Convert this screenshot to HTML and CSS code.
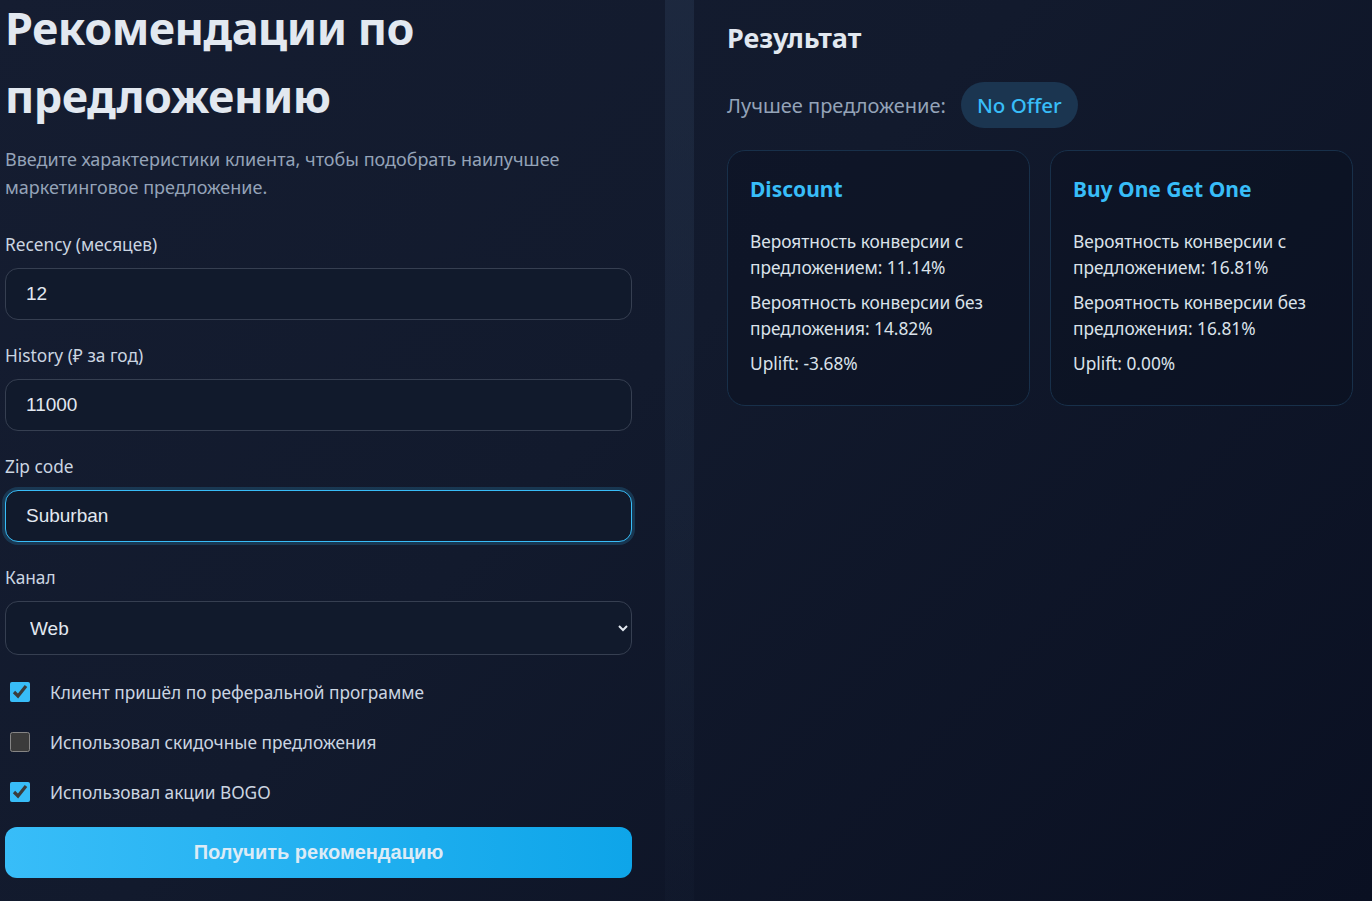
FILE: index.html
```html
<!DOCTYPE html>
<html lang="ru">
<head>
<meta charset="utf-8">
<title>Рекомендации по предложению</title>
<link rel="stylesheet" href="styles.css">
</head>
<body>
<div class="layout">
  <section class="form-panel">
    <h1 class="title">Рекомендации по предложению</h1>
    <p class="subtitle">Введите характеристики клиента, чтобы подобрать наилучшее маркетинговое предложение.</p>
    <form class="form">
      <div class="field">
        <label class="field-label" for="recency">Recency (месяцев)</label>
        <input class="control" id="recency" type="text" value="12">
      </div>
      <div class="field">
        <label class="field-label" for="history">History (₽ за год)</label>
        <input class="control" id="history" type="text" value="11000">
      </div>
      <div class="field">
        <label class="field-label" for="zip">Zip code</label>
        <input class="control control-focus" id="zip" type="text" value="Suburban">
      </div>
      <div class="field">
        <label class="field-label" for="channel">Канал</label>
        <select class="control control-select" id="channel">
          <option>Web</option>
          <option>Phone</option>
          <option>Multichannel</option>
        </select>
      </div>
      <label class="check"><input type="checkbox" checked><span>Клиент пришёл по реферальной программе</span></label>
      <label class="check"><input type="checkbox"><span>Использовал скидочные предложения</span></label>
      <label class="check"><input type="checkbox" checked><span>Использовал акции BOGO</span></label>
      <button class="submit" type="button">Получить рекомендацию</button>
    </form>
  </section>
  <div class="divider"></div>
  <section class="result-panel">
    <h2 class="result-title">Результат</h2>
    <div class="best">
      <span class="best-label">Лучшее предложение:</span>
      <span class="badge">No Offer</span>
    </div>
    <div class="cards">
      <div class="card">
        <h3 class="card-title">Discount</h3>
        <p class="card-line">Вероятность конверсии с предложением: 11.14%</p>
        <p class="card-line">Вероятность конверсии без предложения: 14.82%</p>
        <p class="card-line">Uplift: -3.68%</p>
      </div>
      <div class="card">
        <h3 class="card-title">Buy One Get One</h3>
        <p class="card-line">Вероятность конверсии с предложением: 16.81%</p>
        <p class="card-line">Вероятность конверсии без предложения: 16.81%</p>
        <p class="card-line">Uplift: 0.00%</p>
      </div>
    </div>
  </section>
</div>
</body>
</html>
```
FILE: styles.css
```css
* { box-sizing: border-box; }
html, body { height: 100%; }
body {
  margin: 0;
  color-scheme: dark;
  background: linear-gradient(135deg, #151d31 0%, #121a2d 45%, #0a1022 100%);
  font-family: "Noto Sans", "Open Sans", sans-serif;
  color: #e2e8f0;
  overflow: hidden;
}
.layout {
  display: grid;
  grid-template-columns: 665px 29px 1fr;
  min-height: 100%;
}
.form-panel {
  padding: 0 33px 20px 5px;
}
.title {
  margin: -6px 0 0;
  font-size: 45px;
  line-height: 68px;
  font-weight: 700;
  color: #e2e8f0;
  letter-spacing: -0.5px;
}
.subtitle {
  margin: 15px 0 0;
  font-size: 18px;
  line-height: 28px;
  color: #94a3b8;
}
.form {
  margin-top: 32px;
  display: flex;
  flex-direction: column;
}
.field {
  display: flex;
  flex-direction: column;
  gap: 11px;
  margin-bottom: 24px;
}
.field-label {
  font-size: 17.3px;
  line-height: 24px;
  color: #cbd5e1;
}
.control {
  height: 52px;
  width: 100%;
  padding: 0 20px;
  border: 1px solid #363f51;
  border-radius: 13px;
  background: #111a2c;
  color: #e2e8f0;
  font-family: "Liberation Sans", Arial, sans-serif;
  font-size: 19px;
  outline: none;
}
.control-focus {
  border-color: #38bdf8;
  box-shadow: 0 0 0 3px rgba(56, 189, 248, 0.18);
}
.control-select {
  height: 54px;
  padding: 0 22px 0 20px;
}
.check {
  display: flex;
  align-items: center;
  height: 26px;
  margin-top: 10px;
  margin-bottom: 14px;
  font-size: 17.3px;
  color: #cbd5e1;
}
.check:first-of-type { margin-top: 0; }
.check input {
  width: 20px;
  height: 20px;
  margin: 0 20px 0 5px;
  accent-color: #38bdf8;
}
.submit {
  margin-top: 8px;
  height: 51px;
  width: 100%;
  border: none;
  border-radius: 12px;
  background: linear-gradient(90deg, #38bdf8 0%, #0ea5e9 100%);
  color: #dcebf6;
  font-family: "Liberation Sans", Arial, sans-serif;
  font-weight: 700;
  font-size: 20px;
}
.divider {
  background: linear-gradient(180deg, rgba(40, 56, 82, 0.45) 0%, rgba(40, 56, 82, 0.24) 60%, rgba(40, 56, 82, 0.08) 100%);
}
.result-panel {
  padding: 20px 19px 0 33px;
}
.result-title {
  margin: 0;
  font-size: 27px;
  line-height: 36px;
  font-weight: 700;
  color: #e2e8f0;
}
.best {
  display: flex;
  align-items: center;
  gap: 15px;
  margin-top: 26px;
}
.best-label {
  font-size: 20px;
  color: #94a3b8;
}
.badge {
  display: inline-flex;
  align-items: center;
  height: 46px;
  padding: 0 16px;
  border-radius: 23px;
  background: #1b3550;
  color: #38bdf8;
  font-size: 20.5px;
  font-weight: 500;
}
.cards {
  display: grid;
  grid-template-columns: 1fr 1fr;
  gap: 20px;
  margin-top: 22px;
}
.card {
  height: 256px;
  padding: 20px 22px;
  border: 1px solid #18304a;
  border-radius: 18px;
  background: rgba(8, 14, 30, 0.35);
}
.card-title {
  margin: 3px 0 0;
  font-size: 21px;
  line-height: 30px;
  font-weight: 700;
  color: #38bdf8;
}
.card-line {
  margin: 9px 0 0;
  font-size: 17.3px;
  line-height: 26px;
  color: #dbe2ea;
}
.card-title + .card-line { margin-top: 25px; }
```
